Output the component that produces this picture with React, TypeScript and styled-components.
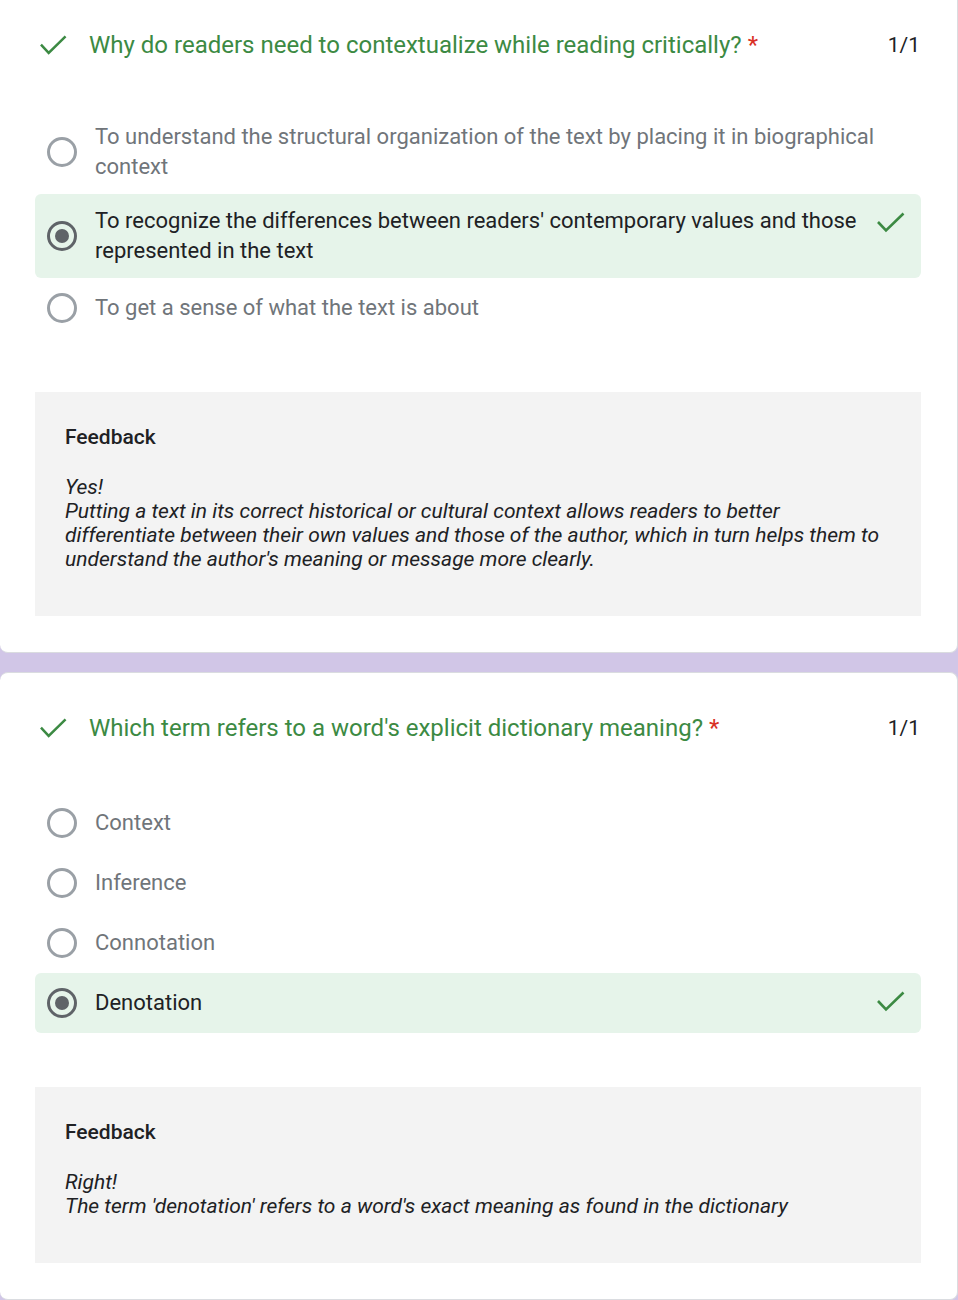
import React from "react";
import styled, { createGlobalStyle } from "styled-components";

const Global = createGlobalStyle`
	html, body {
		margin: 0;
		padding: 0;
		background: #d1c6e7;
		font-family: Roboto, "Noto Sans", Arial, sans-serif;
	}
	* { box-sizing: border-box; }
`;

const Page = styled.div`
	display: flex;
	flex-direction: column;
	gap: 19px;
	margin-top: -11px;
	width: 958px;
	overflow: hidden;
`;

const Card = styled.div`
	background: #fff;
	border: 1px solid #dadce0;
	border-left: none;
	border-radius: 8px;
	padding: 40px 36px 36px 35px;
	width: 958px;
`;

const TitleRow = styled.div`
	display: flex;
	align-items: center;
	height: 30px;
`;

const TitleIcon = styled.div`
	width: 54px;
	display: flex;
	align-items: center;
	padding-left: 5px;
`;

const Title = styled.div`
	flex: 1;
	color: #3c8a43;
	font-size: 24px;
	line-height: 30px;
`;

const Star = styled.span`
	color: #d93025;
	margin-left: 6px;
`;

const Score = styled.div`
	color: #202124;
	font-size: 21px;
	padding-right: 1px;
`;

const Options = styled.div`
	margin-top: 50px;
	display: flex;
	flex-direction: column;
`;

const Option = styled.div<{ $correct?: boolean }>`
	display: flex;
	align-items: center;
	min-height: 60px;
	padding: 12px 16px 12px 12px;
	border-radius: 6px;
	background: ${(p) => (p.$correct ? "#e6f4ea" : "transparent")};
`;

const Radio = styled.div<{ $checked?: boolean }>`
	width: 30px;
	height: 30px;
	flex-shrink: 0;
	border-radius: 50%;
	border: 3px solid ${(p) => (p.$checked ? "#5f6368" : "#9aa0a6")};
	display: flex;
	align-items: center;
	justify-content: center;
	&::after {
		content: "";
		display: ${(p) => (p.$checked ? "block" : "none")};
		width: 14px;
		height: 14px;
		border-radius: 50%;
		background: #5f6368;
	}
`;

const OptionText = styled.div<{ $checked?: boolean }>`
	flex: 1;
	margin-left: 18px;
	font-size: 22px;
	line-height: 30px;
	color: ${(p) => (p.$checked ? "#202124" : "#70757a")};
`;

const OptionCheck = styled.div`
	width: 28px;
	flex-shrink: 0;
	align-self: flex-start;
	margin-top: 6px;
	display: flex;
	justify-content: flex-end;
`;

const Feedback = styled.div`
	margin-top: 54px;
	background: #f3f3f3;
	padding: 33px 30px 45px;
	color: #202124;
`;

const FeedbackLabel = styled.div`
	font-size: 21px;
	font-weight: 500;
	line-height: 24px;
`;

const FeedbackBody = styled.div`
	margin-top: 26px;
	font-size: 21px;
	font-style: italic;
	line-height: 24px;
`;

const Check = ({ w = 28 }: { w?: number }) => (
	<svg width={w} height={w * 0.75} viewBox="0 0 28 21">
		<polyline points="1,10 9,18.5 26.5,1.5" fill="none" stroke="#3c8a43" strokeWidth="2.6" />
	</svg>
);

type Q = {
	title: string;
	options: string[];
	answer: number;
	feedback: string[];
};

const questions: Q[] = [
	{
		title: "Why do readers need to contextualize while reading critically?",
		options: [
			"To understand the structural organization of the text by placing it in biographical context",
			"To recognize the differences between readers' contemporary values and those represented in the text",
			"To get a sense of what the text is about",
		],
		answer: 1,
		feedback: [
			"Yes!",
			"Putting a text in its correct historical or cultural context allows readers to better differentiate between their own values and those of the author, which in turn helps them to understand the author's meaning or message more clearly.",
		],
	},
	{
		title: "Which term refers to a word's explicit dictionary meaning?",
		options: ["Context", "Inference", "Connotation", "Denotation"],
		answer: 3,
		feedback: ["Right!", "The term 'denotation' refers to a word's exact meaning as found in the dictionary"],
	},
];

const App = () => (
	<>
		<Global />
		<Page>
			{questions.map((q) => (
				<Card key={q.title}>
					<TitleRow>
						<TitleIcon>
							<Check w={27} />
						</TitleIcon>
						<Title>
							{q.title}
							<Star>*</Star>
						</Title>
						<Score>1/1</Score>
					</TitleRow>
					<Options>
						{q.options.map((o, i) => (
							<Option key={o} $correct={i === q.answer}>
								<Radio $checked={i === q.answer} />
								<OptionText $checked={i === q.answer}>{o}</OptionText>
								<OptionCheck>{i === q.answer && <Check w={28} />}</OptionCheck>
							</Option>
						))}
					</Options>
					<Feedback>
						<FeedbackLabel>Feedback</FeedbackLabel>
						<FeedbackBody>
							{q.feedback.map((f) => (
								<div key={f}>{f}</div>
							))}
						</FeedbackBody>
					</Feedback>
				</Card>
			))}
		</Page>
	</>
);

export default App;
